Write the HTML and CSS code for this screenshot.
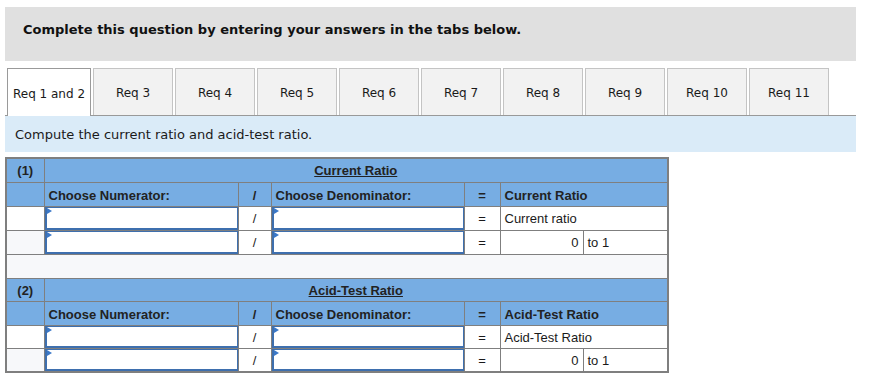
FILE: index.html
```html
<!DOCTYPE html>
<html>
<head>
<meta charset="utf-8">
<link rel="stylesheet" href="styles.css">
</head>
<body>
<div class="page">
  <div class="banner">Complete this question by entering your answers in the tabs below.</div>
  <div class="tabs">
    <div class="tab active">Req 1 and 2</div>
    <div class="tab">Req 3</div>
    <div class="tab">Req 4</div>
    <div class="tab">Req 5</div>
    <div class="tab">Req 6</div>
    <div class="tab">Req 7</div>
    <div class="tab">Req 8</div>
    <div class="tab">Req 9</div>
    <div class="tab">Req 10</div>
    <div class="tab">Req 11</div>
  </div>
  <div class="prompt">Compute the current ratio and acid-test ratio.</div>
  <table class="grid">
    <colgroup>
      <col class="c1"><col class="c2"><col class="c3"><col class="c4"><col class="c5"><col class="c6"><col class="c7">
    </colgroup>
    <tr class="head">
      <td class="num">(1)</td>
      <td colspan="6" class="title"><u>Current Ratio</u></td>
    </tr>
    <tr class="head sub">
      <td></td>
      <td>Choose Numerator:</td>
      <td class="op">/</td>
      <td>Choose Denominator:</td>
      <td class="op">=</td>
      <td colspan="2">Current Ratio</td>
    </tr>
    <tr>
      <td></td>
      <td class="in"><div class="box"></div></td>
      <td class="op">/</td>
      <td class="in"><div class="box"></div></td>
      <td class="op">=</td>
      <td colspan="2">Current ratio</td>
    </tr>
    <tr class="alt">
      <td class="shade"></td>
      <td class="in"><div class="box"></div></td>
      <td class="op">/</td>
      <td class="in"><div class="box"></div></td>
      <td class="op">=</td>
      <td class="val">0</td>
      <td>to 1</td>
    </tr>
    <tr class="spacer"><td colspan="7"></td></tr>
    <tr class="head short">
      <td class="num">(2)</td>
      <td colspan="6" class="title"><u>Acid-Test Ratio</u></td>
    </tr>
    <tr class="head sub">
      <td></td>
      <td>Choose Numerator:</td>
      <td class="op">/</td>
      <td>Choose Denominator:</td>
      <td class="op">=</td>
      <td colspan="2">Acid-Test Ratio</td>
    </tr>
    <tr class="short">
      <td></td>
      <td class="in"><div class="box"></div></td>
      <td class="op">/</td>
      <td class="in"><div class="box"></div></td>
      <td class="op">=</td>
      <td colspan="2">Acid-Test Ratio</td>
    </tr>
    <tr class="alt short">
      <td class="shade"></td>
      <td class="in"><div class="box"></div></td>
      <td class="op">/</td>
      <td class="in"><div class="box"></div></td>
      <td class="op">=</td>
      <td class="val">0</td>
      <td>to 1</td>
    </tr>
  </table>
</div>
</body>
</html>
```
FILE: styles.css
```css
html, body {
  margin: 0;
  padding: 0;
  background: #ffffff;
}
.page {
  padding: 7px 27px 0 5px;
  width: 851px;
}
.banner {
  background: #e0e0e0;
  height: 54px;
  box-sizing: border-box;
  padding: 15px 0 0 18px;
  font-family: "DejaVu Sans", Verdana, sans-serif;
  font-weight: bold;
  font-size: 13px;
  line-height: 16px;
  color: #111;
}
.tabs {
  margin-top: 7px;
  display: flex;
  align-items: flex-end;
  gap: 2px;
  padding-left: 2px;
  border-bottom: 1px solid #999999;
  height: 47px;
}
.tab {
  box-sizing: border-box;
  width: 80px;
  height: 47px;
  border: 1px solid #c4c4c4;
  border-bottom: none;
  background: #f2f2f2;
  display: flex;
  align-items: center;
  justify-content: center;
  font-family: "DejaVu Sans", Verdana, sans-serif;
  font-size: 12px;
  color: #1a1a1a;
  padding-top: 2px;
}
.tab.active {
  width: 84px;
  height: 48px;
  margin-bottom: -1px;
  background: #ffffff;
  border-color: #9a9a9a;
}
.prompt {
  background: #daebf8;
  height: 36px;
  box-sizing: border-box;
  padding: 11px 0 0 10px;
  font-family: "DejaVu Sans", Verdana, sans-serif;
  font-size: 13px;
  line-height: 16px;
  color: #1a1a1a;
}
.grid {
  margin-top: 5px;
  border-collapse: collapse;
  table-layout: fixed;
  width: 662px;
  border: 2px solid #7f7f7f;
  font-family: "Liberation Sans", Arial, sans-serif;
  font-size: 13px;
  color: #1a1a1a;
}
.c1 { width: 38px; }
.c2 { width: 194px; }
.c3 { width: 33px; }
.c4 { width: 193px; }
.c5 { width: 36px; }
.c6 { width: 83px; }
.c7 { width: 85px; }
.grid td {
  border: 1px solid #7f7f7f;
  height: 24px;
  padding: 1px 0 0 4px;
  box-sizing: border-box;
  white-space: nowrap;
  overflow: hidden;
}
.grid tr.short td {
  height: 23px;
}
.grid tr.head td {
  background: #77ade3;
  font-weight: bold;
  color: #222;
}
.grid tr.sub td {
  padding-top: 3px;
}
.grid td.num {
  text-align: center;
  padding-left: 0;
}
.grid td.title {
  text-align: center;
  padding-left: 0;
}
.grid td.op {
  text-align: center;
  padding-left: 0;
}
.grid td.val {
  text-align: right;
  padding-left: 0;
  padding-right: 4px;
}
.grid td.shade {
  background: #f7f8fa;
}
.grid tr.spacer td {
  background: #f7f8fa;
}
.grid td.in {
  padding: 0;
  background: #ffffff;
}
.box {
  position: relative;
  box-sizing: border-box;
  height: 23px;
  border: 1px solid #3e6fae;
  border-left-width: 2px;
  border-bottom-width: 2px;
  background: #ffffff;
}
.grid tr.short .box {
  height: 22px;
}
.box::before {
  content: "";
  position: absolute;
  left: 0;
  top: 0;
  border-top: 3px solid transparent;
  border-bottom: 3px solid transparent;
  border-left: 5px solid #3a78c8;
}
```
